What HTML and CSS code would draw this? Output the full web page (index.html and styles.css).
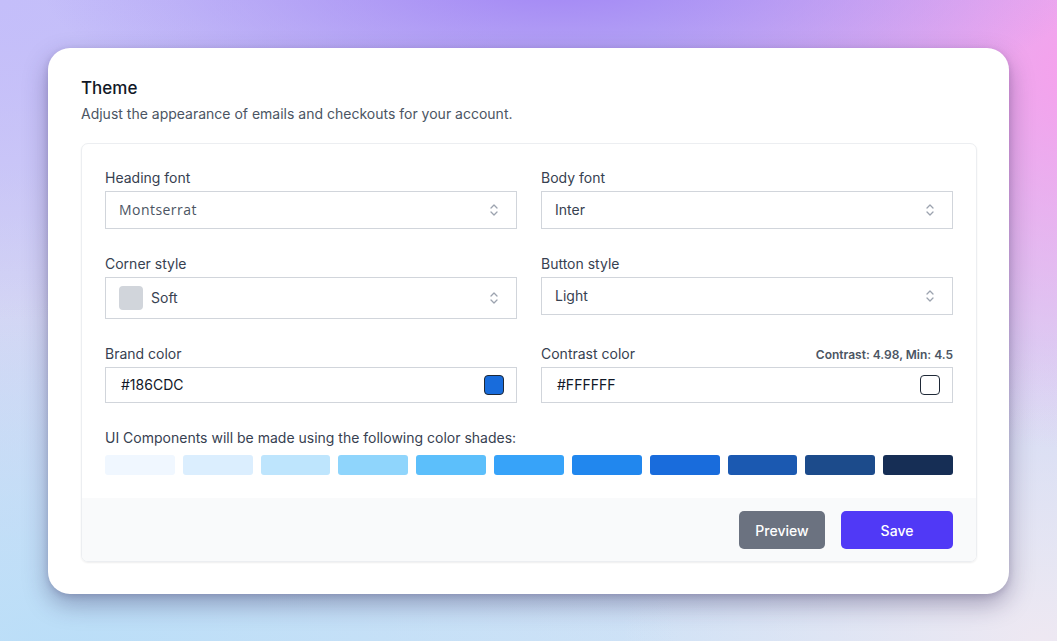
FILE: index.html
```html
<!DOCTYPE html>
<html lang="en">
<head>
<meta charset="utf-8">
<title>Theme settings</title>
<link rel="stylesheet" href="styles.css">
</head>
<body>
<main class="card">
  <header class="card-head">
    <h1 class="title">Theme</h1>
    <p class="subtitle">Adjust the appearance of emails and checkouts for your account.</p>
  </header>

  <section class="panel">
    <div class="panel-body">
      <div class="grid">
        <div class="field">
          <div class="label-row"><label class="label">Heading font</label></div>
          <div class="control select">
            <span class="value montserrat">Montserrat</span>
            <svg class="chev" viewBox="0 0 10 16" width="10" height="16"><path d="M2 6l3-3 3 3M2 10l3 3 3-3" fill="none" stroke="#9ca3af" stroke-width="1.3" stroke-linecap="round" stroke-linejoin="round"/></svg>
          </div>
        </div>
        <div class="field">
          <div class="label-row"><label class="label">Body font</label></div>
          <div class="control select">
            <span class="value">Inter</span>
            <svg class="chev" viewBox="0 0 10 16" width="10" height="16"><path d="M2 6l3-3 3 3M2 10l3 3 3-3" fill="none" stroke="#9ca3af" stroke-width="1.3" stroke-linecap="round" stroke-linejoin="round"/></svg>
          </div>
        </div>

        <div class="field">
          <div class="label-row"><label class="label">Corner style</label></div>
          <div class="control select tall">
            <span class="corner-swatch"></span>
            <span class="value">Soft</span>
            <svg class="chev" viewBox="0 0 10 16" width="10" height="16"><path d="M2 6l3-3 3 3M2 10l3 3 3-3" fill="none" stroke="#9ca3af" stroke-width="1.3" stroke-linecap="round" stroke-linejoin="round"/></svg>
          </div>
        </div>
        <div class="field">
          <div class="label-row"><label class="label">Button style</label></div>
          <div class="control select">
            <span class="value">Light</span>
            <svg class="chev" viewBox="0 0 10 16" width="10" height="16"><path d="M2 6l3-3 3 3M2 10l3 3 3-3" fill="none" stroke="#9ca3af" stroke-width="1.3" stroke-linecap="round" stroke-linejoin="round"/></svg>
          </div>
        </div>

        <div class="field">
          <div class="label-row"><label class="label">Brand color</label></div>
          <div class="control color-input">
            <span class="value hex">#186CDC</span>
            <span class="color-chip brand"></span>
          </div>
        </div>
        <div class="field">
          <div class="label-row">
            <label class="label">Contrast color</label>
            <span class="contrast">Contrast: 4.98, Min: 4.5</span>
          </div>
          <div class="control color-input">
            <span class="value hex">#FFFFFF</span>
            <span class="color-chip white"></span>
          </div>
        </div>
      </div>

      <p class="shades-label">UI Components will be made using the following color shades:</p>
      <div class="shades">
        <span class="shade s50"></span>
        <span class="shade s100"></span>
        <span class="shade s200"></span>
        <span class="shade s300"></span>
        <span class="shade s400"></span>
        <span class="shade s500"></span>
        <span class="shade s600"></span>
        <span class="shade s700"></span>
        <span class="shade s800"></span>
        <span class="shade s900"></span>
        <span class="shade s950"></span>
      </div>
    </div>

    <footer class="panel-foot">
      <button class="btn btn-preview" type="button">Preview</button>
      <button class="btn btn-save" type="button">Save</button>
    </footer>
  </section>
</main>
</body>
</html>
```

FILE: styles.css
```css
* {
  box-sizing: border-box;
}

html, body {
  height: 100%;
}

body {
  margin: 0;
  padding: 48px;
  font-family: Inter, "Noto Sans", "Liberation Sans", sans-serif;
  color: #111827;
  background-color: #d6cdf6;
  background-image:
    radial-gradient(ellipse 520px 160px at 560px -20px, rgba(160, 130, 245, 0.95), rgba(160, 130, 245, 0) 100%),
    radial-gradient(ellipse 440px 380px at 1090px 70px, rgba(247, 160, 236, 1), rgba(247, 160, 236, 0) 100%),
    radial-gradient(ellipse 520px 320px at 0px 0px, rgba(196, 190, 250, 1), rgba(196, 190, 250, 0) 100%),
    radial-gradient(ellipse 620px 360px at 60px 660px, rgba(186, 222, 248, 1), rgba(186, 222, 248, 0) 100%),
    radial-gradient(ellipse 420px 300px at 1040px 640px, rgba(238, 232, 242, 1), rgba(238, 232, 242, 0) 100%),
    linear-gradient(180deg, #c8c2f5 0%, #d4d6f4 50%, #cfe2f6 100%);
  overflow: hidden;
}

/* outer white card */
.card {
  width: 961px;
  background: #ffffff;
  border-radius: 22px;
  padding: 32px 32px 32px 33px;
  box-shadow: 0 10px 24px rgba(40, 30, 80, 0.35), 0 2px 6px rgba(40, 30, 80, 0.15);
}

.card-head {
  margin-bottom: 19px;
}

.title {
  margin: 0;
  font-size: 17px;
  font-weight: 500;
  line-height: 16px;
  color: #111827;
}

.subtitle {
  margin: 8px 0 0;
  font-size: 14px;
  line-height: 20px;
  color: #4b5563;
}

/* inner bordered panel */
.panel {
  border: 1px solid #eceef1;
  border-radius: 7px;
  box-shadow: 0 1px 2px rgba(0, 0, 0, 0.07);
  overflow: hidden;
}

.panel-body {
  padding: 24px 23px 23px 23px;
}

.grid {
  display: grid;
  grid-template-columns: 1fr 1fr;
  column-gap: 24px;
  row-gap: 25px;
  align-items: start;
}

.field {
  display: flex;
  flex-direction: column;
}

.label-row {
  display: flex;
  align-items: center;
  justify-content: space-between;
  height: 20px;
  margin-bottom: 3px;
}

.label {
  font-size: 14px;
  line-height: 20px;
  color: #374151;
}

.contrast {
  font-size: 12px;
  font-weight: 600;
  color: #4b5563;
}

.control {
  display: flex;
  align-items: center;
  border: 1px solid #d1d5db;
  background: #fff;
  height: 38px;
  padding: 0 13px;
}

.control.tall {
  height: 42px;
}

.color-input {
  height: 36px;
  padding: 0 12px 0 15px;
}

.value {
  flex: 1;
  font-size: 14px;
  color: #374151;
  line-height: 20px;
}

.value.montserrat {
  color: #4b5563;
  letter-spacing: 0.45px;
  font-family: "Open Sans", Inter, sans-serif;
}

.value.hex {
  color: #111827;
}

.chev {
  flex: none;
  margin-right: 4px;
}

.corner-swatch {
  width: 24px;
  height: 24px;
  border-radius: 4px;
  background: #d1d5db;
  margin-right: 8px;
  flex: none;
}

.color-chip {
  width: 20px;
  height: 20px;
  border-radius: 4px;
  border: 1.5px solid #1f2937;
  flex: none;
}

.color-chip.brand {
  background: #186cdc;
}

.color-chip.white {
  background: #ffffff;
}

.shades-label {
  margin: 25px 0 7px;
  font-size: 14px;
  line-height: 20px;
  color: #374151;
}

.shades {
  display: flex;
  gap: 8px;
}

.shade {
  flex: 1;
  height: 20px;
  border-radius: 3px;
}

.s50  { background: #f0f7ff; }
.s100 { background: #dbeefe; }
.s200 { background: #bee5fd; }
.s300 { background: #8fd5fc; }
.s400 { background: #5cbffb; }
.s500 { background: #37a3f9; }
.s600 { background: #2187ee; }
.s700 { background: #196cdc; }
.s800 { background: #1b59b1; }
.s900 { background: #1c4b8b; }
.s950 { background: #162e55; }

/* footer with actions */
.panel-foot {
  display: flex;
  justify-content: flex-end;
  gap: 16px;
  background: #f9fafb;
  padding: 13px 23px 12px;
}

.btn {
  height: 38px;
  border: none;
  border-radius: 5px;
  font-family: Inter, "Noto Sans", sans-serif;
  font-size: 14px;
  font-weight: 500;
  color: #ffffff;
  cursor: pointer;
}

.btn-preview {
  width: 86px;
  background: #6b7280;
}

.btn-save {
  width: 112px;
  background: #5039f6;
}
```
